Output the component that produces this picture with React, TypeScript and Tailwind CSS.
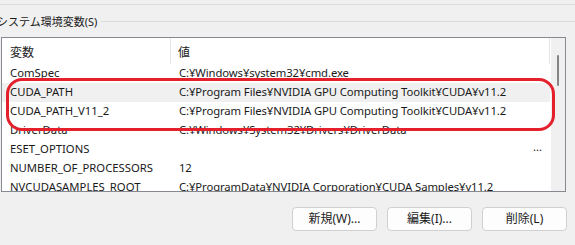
const font = {
  fontFamily: '"Noto Sans", "Noto Sans CJK JP", sans-serif',
};

interface EnvVar {
  name: string;
  value: string;
  hover?: boolean;
}

const rows: EnvVar[] = [
  { name: "ComSpec", value: "C:¥Windows¥system32¥cmd.exe" },
  {
    name: "CUDA_PATH",
    value: "C:¥Program Files¥NVIDIA GPU Computing Toolkit¥CUDA¥v11.2",
    hover: true,
  },
  {
    name: "CUDA_PATH_V11_2",
    value: "C:¥Program Files¥NVIDIA GPU Computing Toolkit¥CUDA¥v11.2",
  },
  { name: "DriverData", value: "C:¥Windows¥System32¥Drivers¥DriverData" },
  { name: "ESET_OPTIONS", value: "" },
  { name: "NUMBER_OF_PROCESSORS", value: "12" },
  {
    name: "NVCUDASAMPLES_ROOT",
    value: "C:¥ProgramData¥NVIDIA Corporation¥CUDA Samples¥v11.2",
  },
];

export default function App() {
  return (
    <div
      className="relative w-[575px] h-[245px] bg-[#f0f0f0] overflow-hidden text-[11.3px] text-[#1a1a1a]"
      style={font}
    >
      {/* top divider */}
      <div className="h-[4px]" />
      <div className="h-px bg-[#dcdcdc]" />

      {/* group title */}
      <div className="flex items-center h-[32px] -ml-[3px] pt-[1px]">
        <span className="leading-none whitespace-nowrap pr-[4px] text-[11px]">
          システム環境変数(S)
        </span>
        <div className="flex-1 h-px bg-[#dcdcdc] -mt-[1px]" />
      </div>

      {/* list */}
      <div className="ml-[1px] w-[565px] h-[155px] border border-[#868a90] bg-white flex overflow-hidden">
        <div className="w-[548px] flex flex-col">
          <div className="flex h-[26px] shrink-0">
            <div className="w-[169px] pl-[8px] h-full flex items-center pt-[4px] border-r border-[#e5e5e5] text-[12px]">
              変数
            </div>
            <div className="flex-1 pl-[7px] h-full flex items-center pt-[4px] border-r border-[#e5e5e5] text-[12px]">
              値
            </div>
          </div>
          {rows.map((r) => (
            <div
              key={r.name}
              className={`flex h-[19px] items-center shrink-0 whitespace-nowrap ${
                r.hover ? "bg-[#f0f0f0]" : ""
              }`}
            >
              <div className="w-[169px] pl-[8px]">{r.name}</div>
              <div className="flex-1 pl-[8px] tracking-[-0.1px]">{r.value}</div>
              {r.name === "ESET_OPTIONS" && (
                <div className="pr-[8px] -mt-[4px]">...</div>
              )}
            </div>
          ))}
        </div>
        <div className="w-px" />
        <div className="flex-1 bg-[#f0f0f0] flex justify-center pt-[17px]">
          <div className="w-[2px] h-[31px] bg-[#858585] rounded-full" />
        </div>
      </div>

      {/* buttons */}
      <div className="flex justify-end gap-[10px] pr-[8px] pt-[15px]">
        {["新規(W)...", "編集(I)...", "削除(L)"].map((b) => (
          <button
            key={b}
            className="w-[85px] h-[24px] rounded-[4px] border border-[#d0d0d0] bg-[#fdfdfd] text-[12px] leading-none"
          >
            {b}
          </button>
        ))}
      </div>

      {/* red highlight */}
      <div className="absolute left-[6px] top-[78px] w-[549px] h-[53px] rounded-[16px] border-[3px] border-[#e3202b]" />
    </div>
  );
}
